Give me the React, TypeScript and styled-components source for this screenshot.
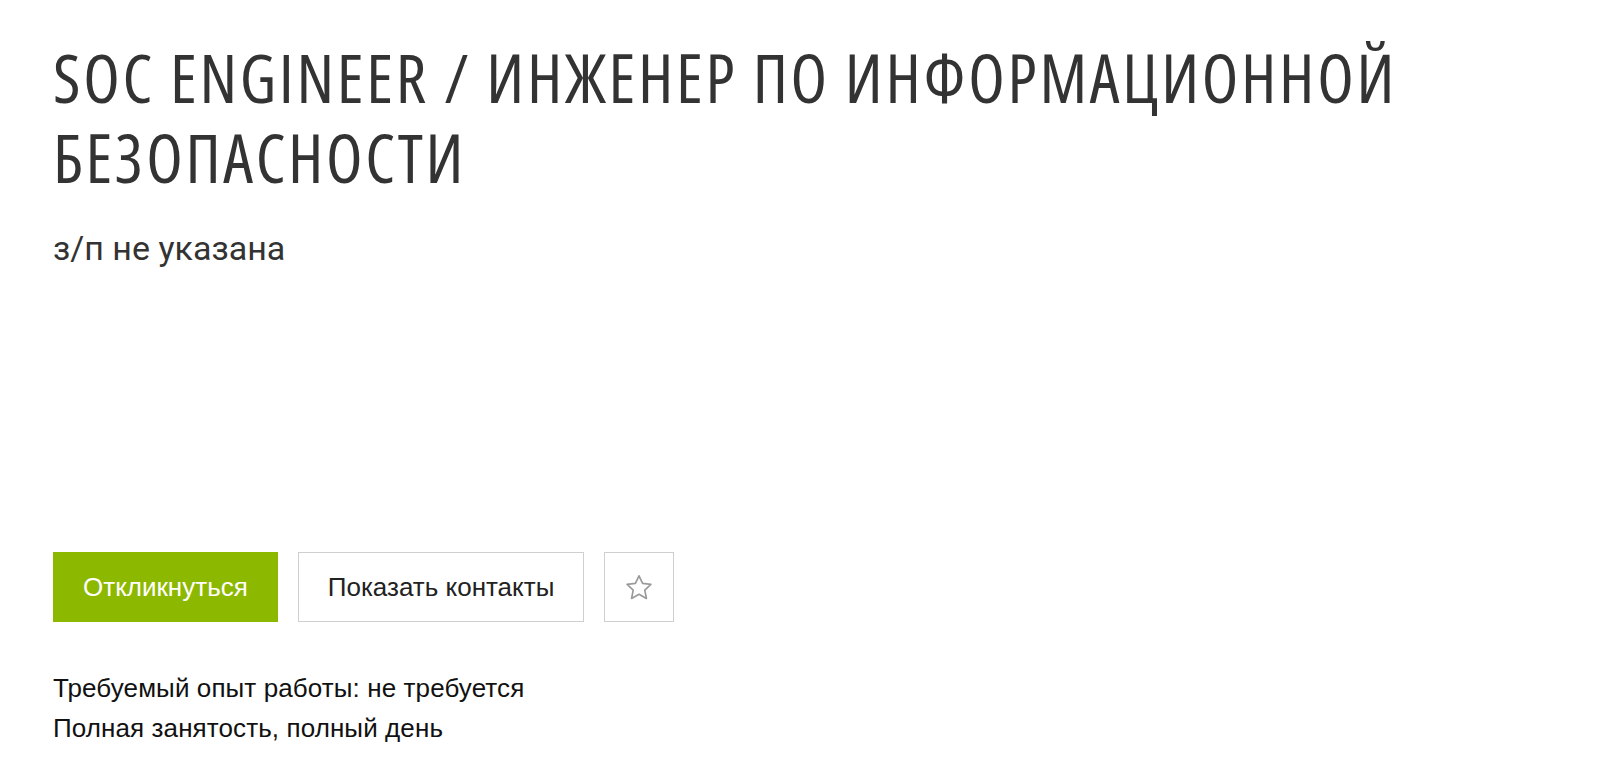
import React from "react";
import styled, { createGlobalStyle } from "styled-components";

const GlobalStyle = createGlobalStyle`
  html, body {
    margin: 0;
    padding: 0;
    background: #ffffff;
  }
  body {
    font-family: "Liberation Sans", Arial, sans-serif;
    color: #000;
  }
`;

const Page = styled.main`
  box-sizing: border-box;
  width: 1600px;
  min-height: 773px;
  padding: 37px 53px 0 53px;
  display: flex;
  flex-direction: column;
`;

const Title = styled.h1`
  margin: 0;
  max-width: 1494px;
  font-family: "Open Sans", "Noto Sans", sans-serif;
  font-stretch: 75%;
  font-weight: 400;
  font-size: 67px;
  line-height: 80px;
  letter-spacing: 2.7px;
  color: #333333;
  text-transform: uppercase;
`;

const Salary = styled.div`
  margin-top: 31px;
  font-family: Roboto, "Open Sans", sans-serif;
  font-size: 34px;
  line-height: 40px;
  color: #333333;
`;

const Actions = styled.div`
  margin-top: 284px;
  display: flex;
  gap: 20px;
  align-items: stretch;
`;

const Button = styled.button<{ $primary?: boolean; $square?: boolean }>`
  box-sizing: border-box;
  height: 70px;
  margin: 0;
  padding: ${(p) => (p.$square ? "0" : "0 29px")};
  width: ${(p) => (p.$square ? "70px" : "auto")};
  display: inline-flex;
  align-items: center;
  justify-content: center;
  font-family: "Liberation Sans", Arial, sans-serif;
  font-size: 26px;
  border-radius: 0;
  cursor: pointer;
  background: ${(p) => (p.$primary ? "#8db800" : "#ffffff")};
  color: ${(p) => (p.$primary ? "#ffffff" : "#222222")};
  border: 1px solid ${(p) => (p.$primary ? "#8db800" : "#cfcfcf")};
`;

const Details = styled.div`
  margin-top: 46px;
  display: flex;
  flex-direction: column;
`;

const DetailLine = styled.p`
  margin: 0;
  font-size: 26px;
  line-height: 40px;
  letter-spacing: 0.1px;
  color: #111111;
`;

function StarIcon() {
  return (
    <svg width="28" height="27" viewBox="0 0 28 27" fill="none" aria-hidden="true">
      <path
        d="M14 1.8 L17.6 9.4 L25.9 10.4 L19.8 16.1 L21.4 24.4 L14 20.3 L6.6 24.4 L8.2 16.1 L2.1 10.4 L10.4 9.4 Z"
        stroke="#9a9a9a"
        strokeWidth="1.7"
        strokeLinejoin="round"
      />
    </svg>
  );
}

export default function App() {
  return (
    <>
      <GlobalStyle />
      <Page>
        <Title>SOC Engineer / Инженер по информационной безопасности</Title>
        <Salary>з/п не указана</Salary>
        <Actions>
          <Button $primary>Откликнуться</Button>
          <Button>Показать контакты</Button>
          <Button $square aria-label="В избранное">
            <StarIcon />
          </Button>
        </Actions>
        <Details>
          <DetailLine>Требуемый опыт работы: не требуется</DetailLine>
          <DetailLine>Полная занятость, полный день</DetailLine>
        </Details>
      </Page>
    </>
  );
}
